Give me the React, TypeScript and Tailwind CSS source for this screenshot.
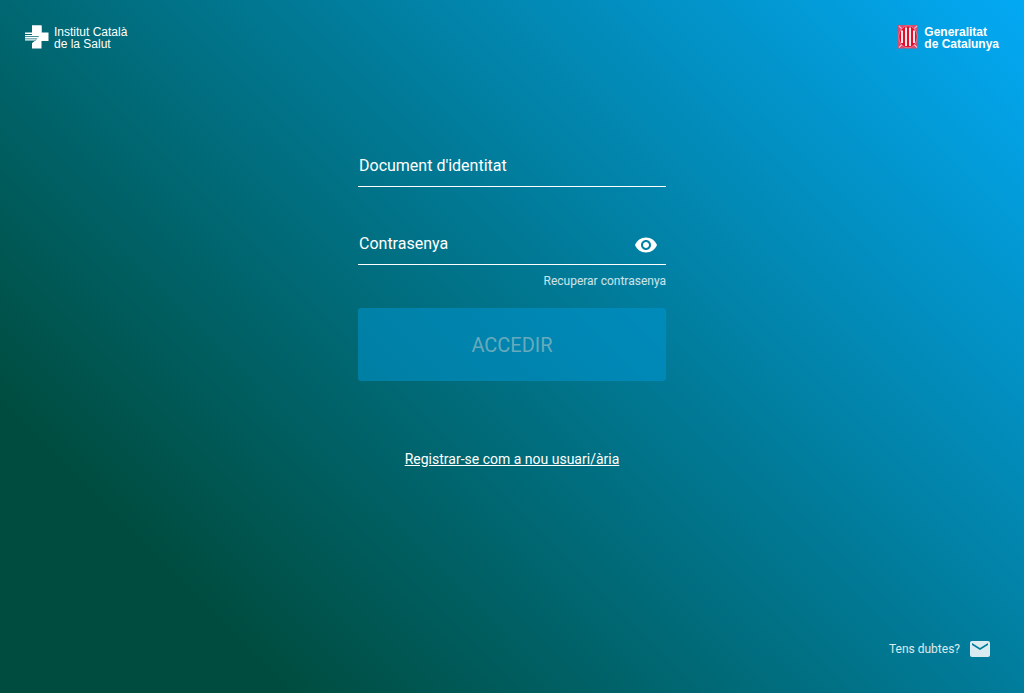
import { useState } from "react";

function HealthInstituteMark() {
  return (
    <svg className="h-6 w-6 shrink-0" viewBox="0 0 24 24" fill="#fff" aria-hidden="true">
      <path d="M7 0.5H16.5V7.5H23.5V16H16.5V23.5H7V18L10.5 15.6L14.5 10.6H7Z" />
      <path d="M7 0.5H16.5V10H7Z" />
      <path d="M0 7.6H16V9H0ZM0 9.9H15.2L14.2 11.2H0ZM0 12.1H13.4L12.2 13.4H0ZM0 14.3H11.4L9.6 15.6H0Z" />
    </svg>
  );
}

function GovernmentMark() {
  return (
    <svg className="h-6 w-5 shrink-0" viewBox="0 0 20 24" aria-hidden="true">
      <rect x="0" y="0" width="20" height="23.5" fill="#d94a6c" />
      <path d="M1 1L4 4M19 1L16 4M1 22.5L4 19.5M19 22.5L16 19.5" stroke="#e9b4cb" strokeWidth="1.2" />
      <ellipse cx="10" cy="11.8" rx="9.2" ry="11" fill="#e30d2d" stroke="#eda9ba" strokeWidth="0.6" />
      <path d="M4 5.5V18M8 2.5V21M12 2.5V21M16 5.5V18" stroke="#fff" strokeWidth="1.8" />
    </svg>
  );
}

export default function App() {
  const [documentId, setDocumentId] = useState("");
  const [password, setPassword] = useState("");
  const [visible, setVisible] = useState(false);

  const fieldClass =
    "h-12 w-full border-b border-white bg-transparent px-px pt-1.5 text-base text-white outline-none placeholder:text-white placeholder:opacity-100";

  return (
    <div className="flex min-h-screen flex-col bg-[linear-gradient(45deg,#004d40_17%,#006064_34%,#03a9f4_100%)] font-['Roboto',sans-serif] text-white">
      <header className="flex items-start justify-between px-[25px] pt-[25px]">
        <div className="flex items-start gap-[5px] font-['Liberation_Sans',sans-serif] text-xs leading-3">
          <HealthInstituteMark />
          <p className="pt-px">
            Institut Català
            <br />
            de la Salut
          </p>
        </div>
        <div className="flex items-start gap-1.5 font-['Liberation_Sans',sans-serif] text-xs leading-3 font-bold">
          <GovernmentMark />
          <p className="pt-px">
            Generalitat
            <br />
            de Catalunya
          </p>
        </div>
      </header>

      <main className="flex flex-1 flex-col items-center px-6 pt-[89px]">
        <form className="flex w-full max-w-[308px] flex-col" onSubmit={(e) => e.preventDefault()}>
          <input
            type="text"
            aria-label="Document d'identitat"
            placeholder="Document d'identitat"
            value={documentId}
            onChange={(e) => setDocumentId(e.target.value)}
            className={fieldClass}
          />
          <div className="relative mt-[30px]">
            <input
              type={visible ? "text" : "password"}
              aria-label="Contrasenya"
              placeholder="Contrasenya"
              value={password}
              onChange={(e) => setPassword(e.target.value)}
              className={fieldClass}
            />
            <button
              type="button"
              aria-label="Mostra la contrasenya"
              onClick={() => setVisible(!visible)}
              className="absolute top-4 right-2"
            >
              <svg className="h-6 w-6" viewBox="0 0 24 24" fill="currentColor" aria-hidden="true">
                <path d="M12 4.5C7 4.5 2.73 7.61 1 12c1.73 4.39 6 7.5 11 7.5s9.27-3.11 11-7.5c-1.73-4.39-6-7.5-11-7.5zM12 17c-2.76 0-5-2.24-5-5s2.24-5 5-5 5 2.24 5 5-2.24 5-5 5zm0-8c-1.66 0-3 1.34-3 3s1.34 3 3 3 3-1.34 3-3-1.34-3-3-3z" />
              </svg>
            </button>
          </div>
          <a href="#recuperar" className="mt-2 self-end text-xs leading-4 text-white/80">
            Recuperar contrasenya
          </a>
          <button
            type="submit"
            disabled={!documentId || !password}
            className="mt-[19px] h-[73px] w-full rounded-[3px] bg-[#0098d8]/50 text-xl text-[#b0c4c6]/60"
          >
            ACCEDIR
          </button>
        </form>
        <a href="#registre" className="mt-[68px] text-sm leading-5 underline">
          Registrar-se com a nou usuari/ària
        </a>
      </main>

      <footer className="flex justify-end px-8 pb-8">
        <a href="#dubtes" className="flex items-center gap-2 text-xs text-white/85">
          Tens dubtes?
          <svg className="h-6 w-6" viewBox="0 0 24 24" fill="currentColor" aria-hidden="true">
            <path d="M20 4H4c-1.1 0-1.99.9-1.99 2L2 18c0 1.1.9 2 2 2h16c1.1 0 2-.9 2-2V6c0-1.1-.9-2-2-2zm0 4l-8 5-8-5V6l8 5 8-5v2z" />
          </svg>
        </a>
      </footer>
    </div>
  );
}
